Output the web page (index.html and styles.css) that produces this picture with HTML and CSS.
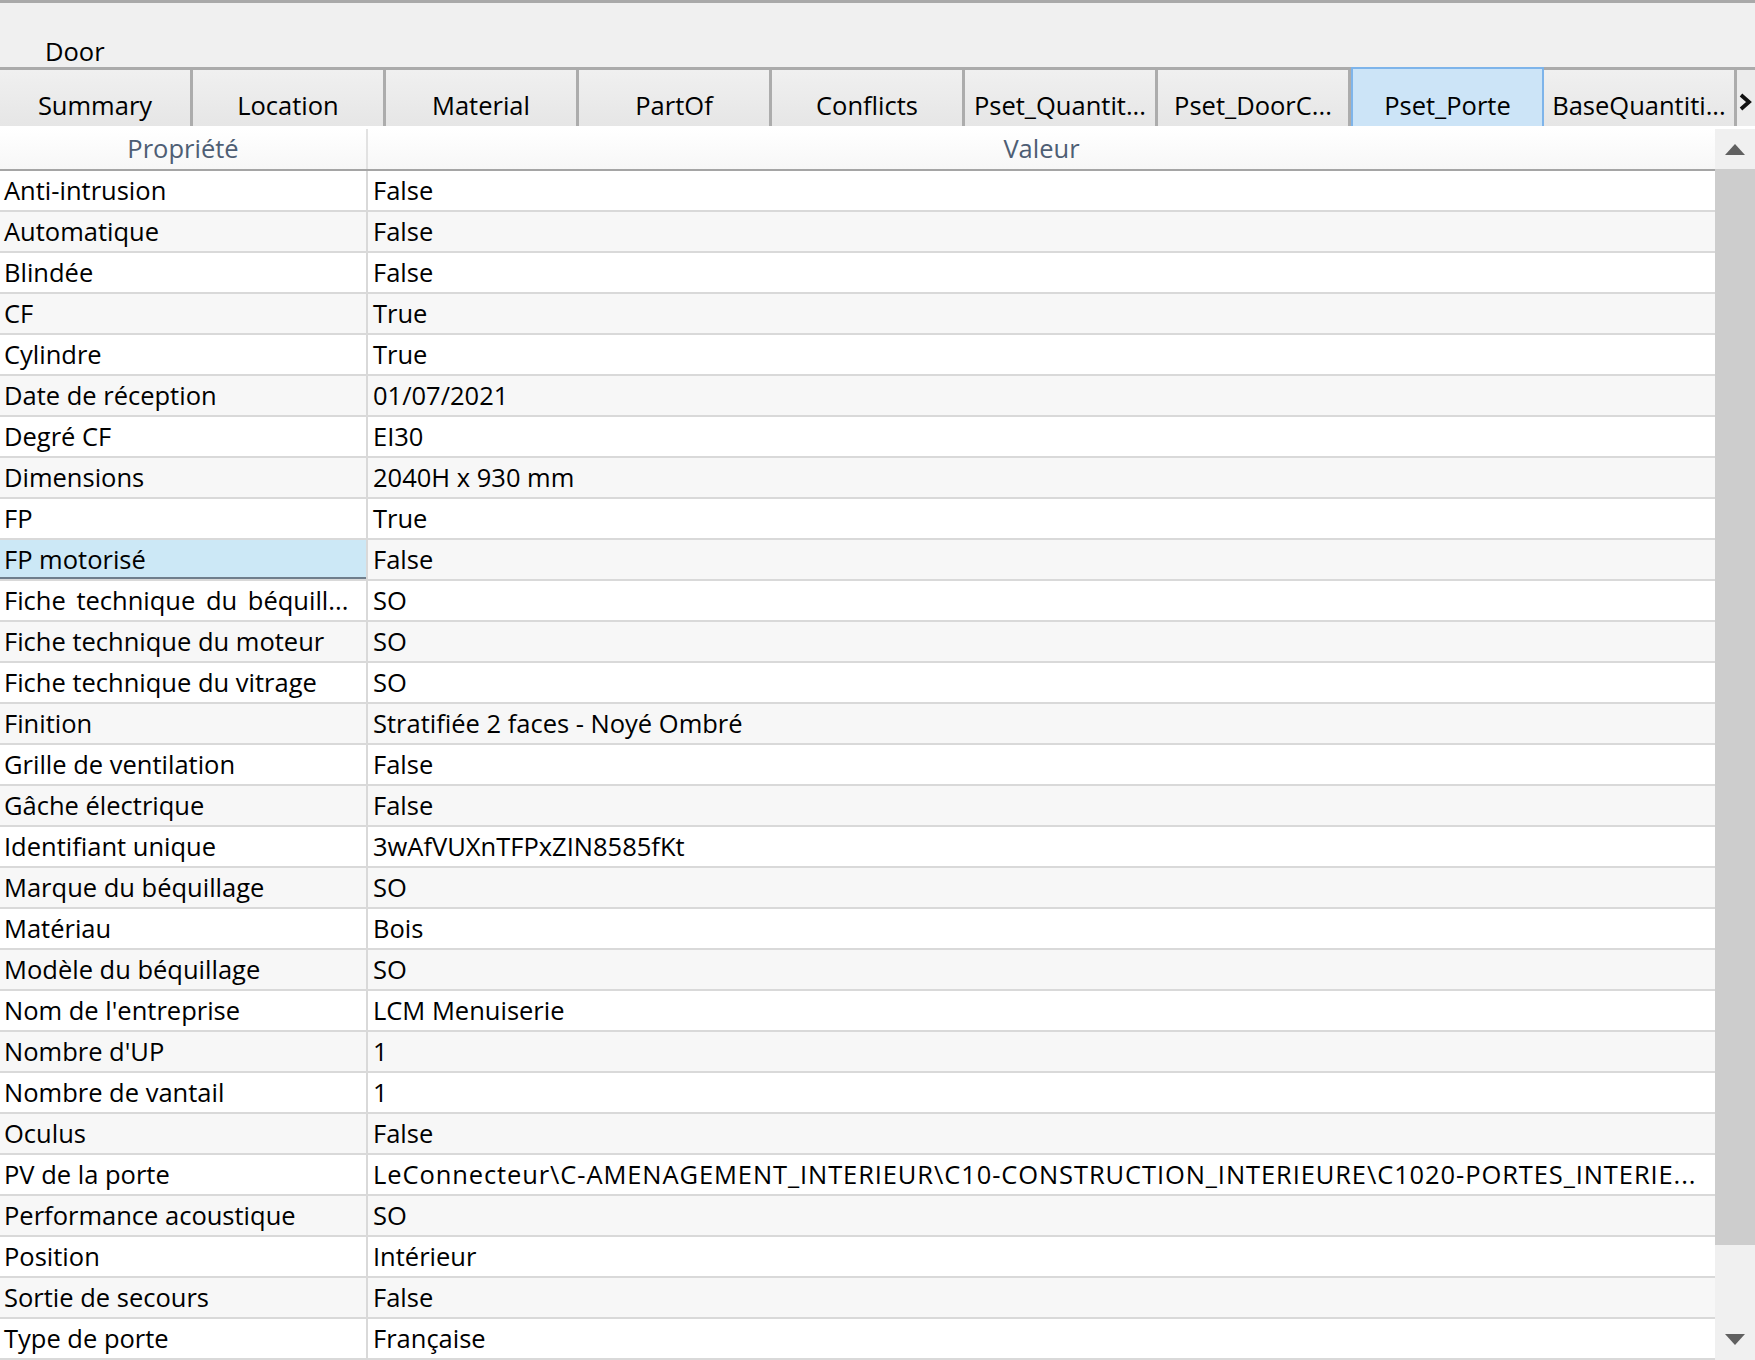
FILE: index.html
```html
<!DOCTYPE html>
<html lang="fr">
<head>
    <meta charset="UTF-8">
    <title>Door - Propriétés</title>
    <link rel="stylesheet" href="styles.css">
</head>
<body>

<div class="window">
    <div class="title">Door</div>

    <!-- Tab strip -->
    <div class="tabs">
        <div class="tab">Summary</div>
        <div class="tab">Location</div>
        <div class="tab">Material</div>
        <div class="tab">PartOf</div>
        <div class="tab">Conflicts</div>
        <div class="tab">Pset_Quantit...</div>
        <div class="tab">Pset_DoorC...</div>
        <div class="tab selected">Pset_Porte</div>
        <div class="tab">BaseQuantiti...</div>
        <div class="tab-more">
            <svg width="13" height="20" viewBox="0 0 13 20"><path d="M2 3 L10 10 L2 17" fill="none" stroke="#111" stroke-width="3.8"/></svg>
        </div>
    </div>

    <!-- Property grid -->
    <div class="panel">
        <div class="grid">
            <div class="grid-head">
                <div class="cell prop">Propriété</div>
                <div class="cell val">Valeur</div>
            </div>
            <div class="row"><div class="cell prop">Anti-intrusion</div><div class="cell val">False</div></div>
            <div class="row"><div class="cell prop">Automatique</div><div class="cell val">False</div></div>
            <div class="row"><div class="cell prop">Blindée</div><div class="cell val">False</div></div>
            <div class="row"><div class="cell prop">CF</div><div class="cell val">True</div></div>
            <div class="row"><div class="cell prop">Cylindre</div><div class="cell val">True</div></div>
            <div class="row"><div class="cell prop">Date de réception</div><div class="cell val">01/07/2021</div></div>
            <div class="row"><div class="cell prop">Degré CF</div><div class="cell val">EI30</div></div>
            <div class="row"><div class="cell prop">Dimensions</div><div class="cell val">2040H x 930 mm</div></div>
            <div class="row"><div class="cell prop">FP</div><div class="cell val">True</div></div>
            <div class="row"><div class="cell prop active">FP motorisé</div><div class="cell val">False</div></div>
            <div class="row"><div class="cell prop spaced">Fiche technique du béquill...</div><div class="cell val">SO</div></div>
            <div class="row"><div class="cell prop">Fiche technique du moteur</div><div class="cell val">SO</div></div>
            <div class="row"><div class="cell prop">Fiche technique du vitrage</div><div class="cell val">SO</div></div>
            <div class="row"><div class="cell prop">Finition</div><div class="cell val">Stratifiée 2 faces - Noyé Ombré</div></div>
            <div class="row"><div class="cell prop">Grille de ventilation</div><div class="cell val">False</div></div>
            <div class="row"><div class="cell prop">Gâche électrique</div><div class="cell val">False</div></div>
            <div class="row"><div class="cell prop">Identifiant unique</div><div class="cell val">3wAfVUXnTFPxZIN8585fKt</div></div>
            <div class="row"><div class="cell prop">Marque du béquillage</div><div class="cell val">SO</div></div>
            <div class="row"><div class="cell prop">Matériau</div><div class="cell val">Bois</div></div>
            <div class="row"><div class="cell prop">Modèle du béquillage</div><div class="cell val">SO</div></div>
            <div class="row"><div class="cell prop">Nom de l'entreprise</div><div class="cell val">LCM Menuiserie</div></div>
            <div class="row"><div class="cell prop">Nombre d'UP</div><div class="cell val">1</div></div>
            <div class="row"><div class="cell prop">Nombre de vantail</div><div class="cell val">1</div></div>
            <div class="row"><div class="cell prop">Oculus</div><div class="cell val">False</div></div>
            <div class="row"><div class="cell prop">PV de la porte</div><div class="cell val path">LeConnecteur\C-AMENAGEMENT_INTERIEUR\C10-CONSTRUCTION_INTERIEURE\C1020-PORTES_INTERIE...</div></div>
            <div class="row"><div class="cell prop">Performance acoustique</div><div class="cell val">SO</div></div>
            <div class="row"><div class="cell prop">Position</div><div class="cell val">Intérieur</div></div>
            <div class="row"><div class="cell prop">Sortie de secours</div><div class="cell val">False</div></div>
            <div class="row"><div class="cell prop">Type de porte</div><div class="cell val">Française</div></div>
        </div>

        <!-- Vertical scrollbar -->
        <div class="scrollbar">
            <div class="sb-button">
                <svg width="20" height="12" viewBox="0 0 20 12"><path d="M0 12 L10 1 L20 12 Z" fill="#606060"/></svg>
            </div>
            <div class="sb-thumb"></div>
            <div class="sb-track"></div>
            <div class="sb-button">
                <svg width="20" height="12" viewBox="0 0 20 12"><path d="M0 0 L20 0 L10 11 Z" fill="#606060"/></svg>
            </div>
        </div>
    </div>
</div>

</body>
</html>
```

FILE: styles.css
```css
body {
    margin: 0;
    font-family: "Open Sans", "Noto Sans", sans-serif;
    font-size: 25.5px;
    color: #000;
    background: #f0f0f0;
}
.window {
    width: 1755px;
    height: 1360px;
    display: flex;
    flex-direction: column;
    border-top: 3px solid #a9a9a9;
    box-sizing: border-box;
    overflow: hidden;
}
.title {
    height: 64px;
    box-sizing: border-box;
    padding: 31px 0 0 45px;
    line-height: 34px;
}
/* Tab strip */
.tabs {
    height: 59px;
    display: flex;
    border-top: 3px solid #ababab;
    box-sizing: border-box;
}
.tab {
    width: 193px;
    flex-shrink: 0;
    box-sizing: border-box;
    border-right: 3px solid #acacac;
    background: linear-gradient(#f0f0f0, #e6e6e6);
    text-align: center;
    padding-top: 17px;
    line-height: 36px;
    white-space: nowrap;
    overflow: hidden;
}
.tab.selected {
    background: #cce4f7;
    border: 2px solid #7eb4ea;
    border-bottom: none;
    margin-top: -3px;
    padding-top: 18px;
}
.tab-more {
    flex: 1;
    display: flex;
    align-items: center;
    padding: 8px 0 0 2px;
    background: #ececec;
}
/* Grid */
.panel {
    flex: 1;
    display: flex;
    background: #fff;
    padding-top: 3px;
}
.grid {
    flex: 1;
    display: flex;
    flex-direction: column;
}
.grid-head {
    display: flex;
    height: 40px;
    border-bottom: 2px solid #a5a5a5;
    background: linear-gradient(#ffffff, #f7f7f7);
    color: #4e5e74;
}
.grid-head .cell {
    text-align: center;
    padding: 0;
}
.grid-head .prop {
    border-right: 2px solid #e2e2e2;
}
.row {
    display: flex;
    height: 41px;
    box-sizing: border-box;
    border-bottom: 2px solid #d9d9d9;
}
.row:nth-child(odd) {
    background: #f7f7f7;
}
.cell {
    line-height: 39px;
    white-space: nowrap;
    overflow: hidden;
}
.prop {
    width: 368px;
    flex-shrink: 0;
    box-sizing: border-box;
    padding-left: 4px;
    border-right: 2px solid #d9d9d9;
}
.prop.spaced {
    word-spacing: 4px;
}
.prop.active {
    background: #cce8f6;
    box-shadow: inset 0 -2px 0 #6f7e8c;
}
.val {
    flex: 1;
    padding-left: 5px;
}
.val.path {
    letter-spacing: 0.9px;
}
/* Scrollbar */
.scrollbar {
    width: 40px;
    display: flex;
    flex-direction: column;
    background: #f0f0f0;
}
.sb-button {
    height: 40px;
    display: flex;
    align-items: center;
    justify-content: center;
}
.sb-thumb {
    height: 1076px;
    background: #cdcdcd;
}
.sb-track {
    flex: 1;
}
```
